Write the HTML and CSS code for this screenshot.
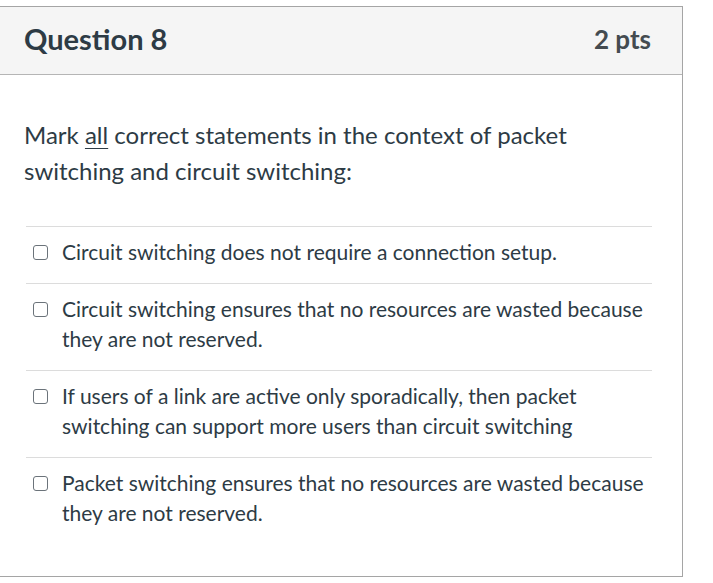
FILE: index.html
```html
<!DOCTYPE html>
<html>
<head>
<meta charset="utf-8">
<link rel="stylesheet" href="styles.css">
</head>
<body>
<div class="card">
  <div class="header">
    <h2 class="title">Question 8</h2>
    <div class="pts">2 pts</div>
  </div>
  <div class="content">
    <p class="question">Mark <u>all</u> correct statements in the context of packet switching and circuit switching:</p>
    <div class="answers">
      <label class="answer"><span class="box"></span><span class="text">Circuit switching does not require a connection setup.</span></label>
      <label class="answer"><span class="box"></span><span class="text">Circuit switching ensures that no resources are wasted because they are not reserved.</span></label>
      <label class="answer"><span class="box"></span><span class="text">If users of a link are active only sporadically, then packet switching can support more users than circuit switching</span></label>
      <label class="answer"><span class="box"></span><span class="text">Packet switching ensures that no resources are wasted because they are not reserved.</span></label>
    </div>
  </div>
</div>
</body>
</html>
```
FILE: styles.css
```css
html, body {
  margin: 0;
  padding: 0;
  background: #fff;
}
body {
  font-family: Lato, "Open Sans", sans-serif;
  color: #2d3b45;
}
.card {
  margin: 6px 0 0 -1px;
  width: 682px;
  height: 569px;
  border: 1px solid #a5a5a5;
  box-sizing: content-box;
}
.header {
  height: 68px;
  box-sizing: border-box;
  background: #f5f5f5;
  border-bottom: 1px solid #b5b5b5;
  display: flex;
  align-items: center;
  justify-content: space-between;
  padding: 0 31px 4px 24px;
}
.title {
  margin: 0;
  font-size: 29px;
  font-weight: 700;
  color: #2d3b45;
}
.pts {
  font-size: 26px;
  font-weight: 700;
  color: #444b50;
}
.content {
  padding: 42px 30px 0 24px;
}
.question {
  margin: 0 0 37px;
  font-size: 24px;
  line-height: 36px;
  font-weight: 400;
}
.question u {
  text-decoration-thickness: 1px;
  text-underline-offset: 4px;
}
.answers {
  display: flex;
  flex-direction: column;
  margin-left: 2px;
}
.answer {
  display: flex;
  align-items: flex-start;
  gap: 14px;
  border-top: 1px solid #dcdcdc;
  padding: 10px 0 16px 7px;
  font-size: 21px;
  line-height: 30px;
}
.box {
  flex: none;
  width: 13px;
  height: 13px;
  margin-top: 8px;
  border: 1.5px solid #6b737a;
  border-radius: 3px;
  background: #fff;
}
.text {
  flex: 1;
}
```
